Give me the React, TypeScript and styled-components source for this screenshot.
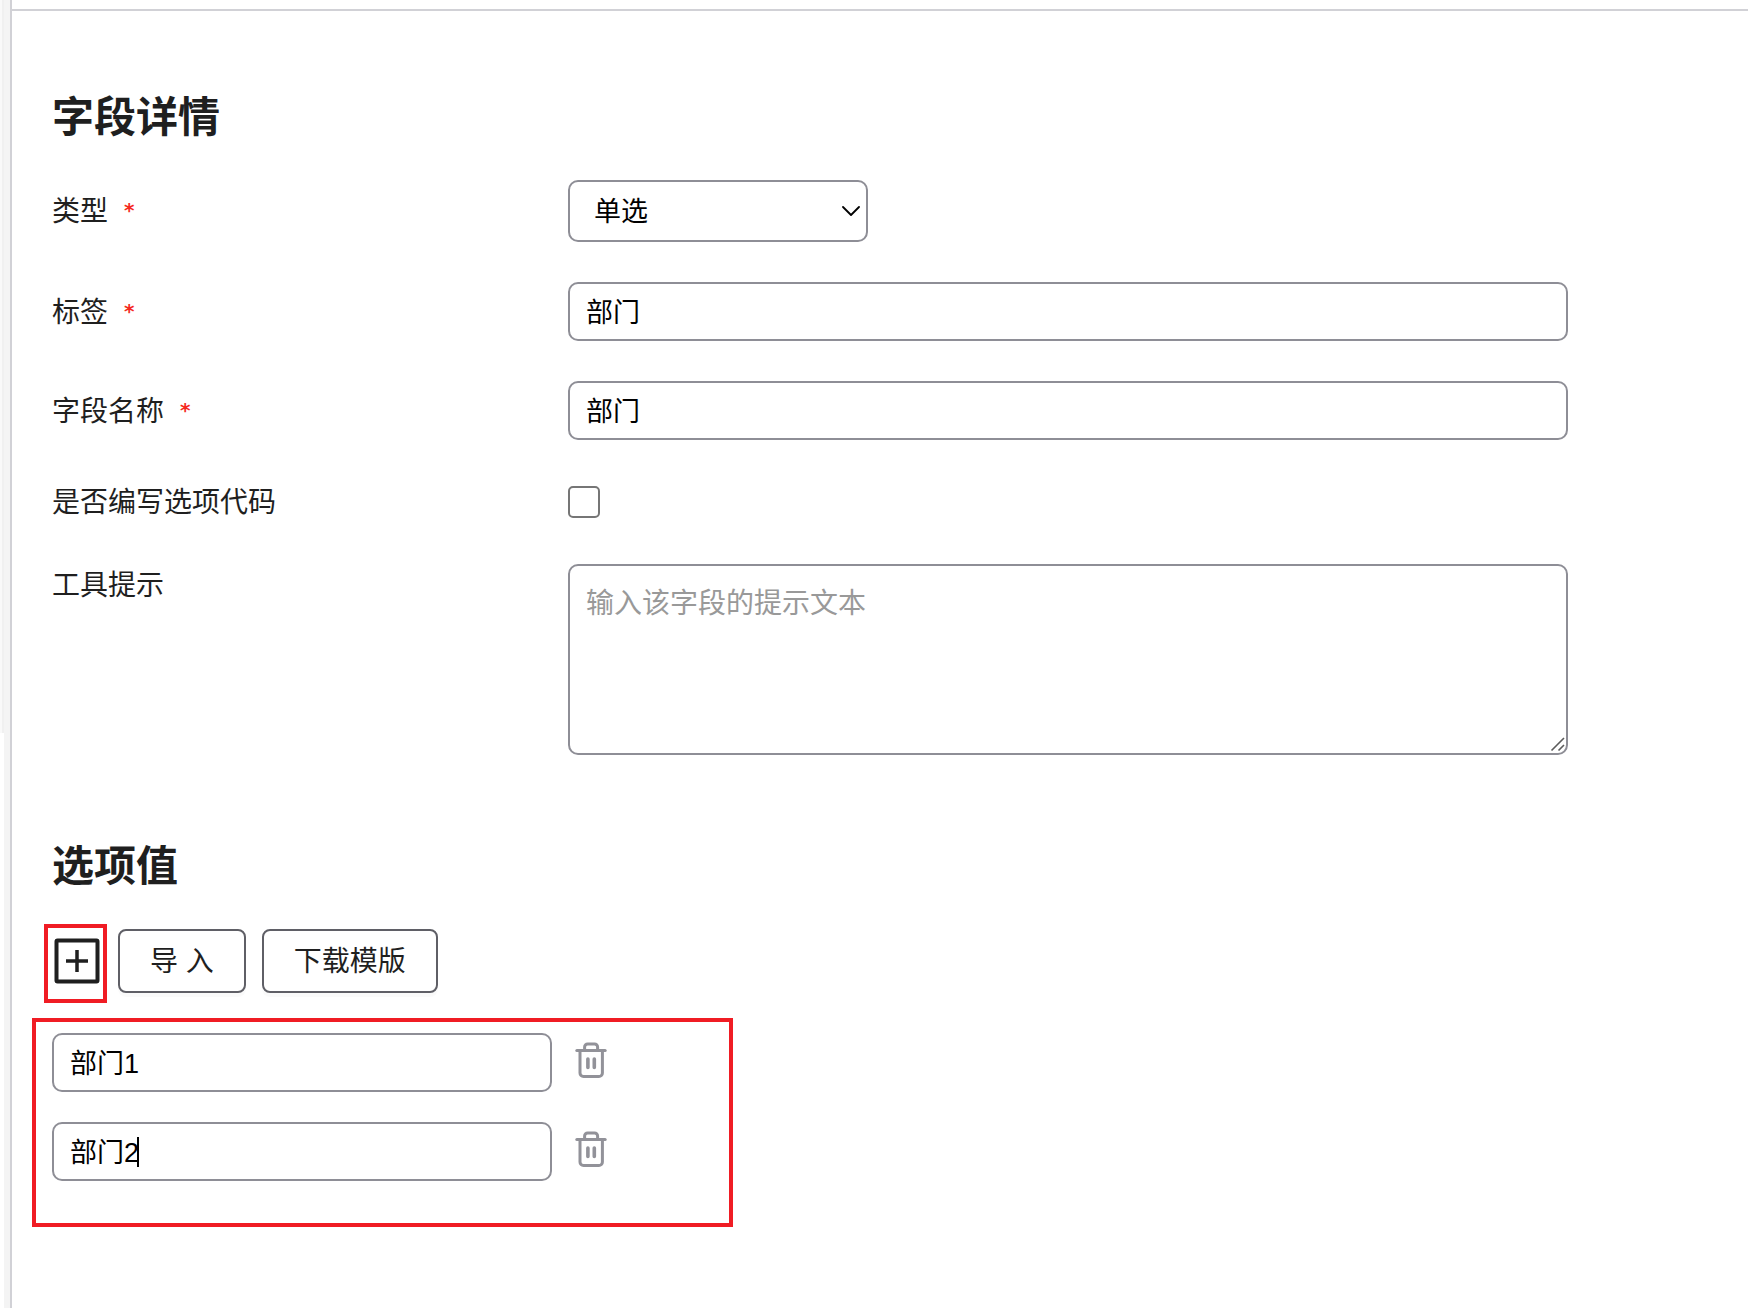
import { useState } from "react";
import styled, { createGlobalStyle } from "styled-components";

const GlobalStyle = createGlobalStyle`
  *, *::before, *::after { box-sizing: border-box; }
  body {
    margin: 0;
    background: #fff;
    color: #1f1f1f;
    font-family: "Liberation Sans", "Noto Sans CJK SC", sans-serif;
    font-size: 28px;
    line-height: 40px;
  }
  button, input, select, textarea { font-family: inherit; }
`;

const Page = styled.div`
  display: flex;
  min-height: 100vh;
`;

const Rail = styled.aside`
  display: flex;
  flex: none;
  width: 12px;
  background: #f4f4f4;
  border-right: 2px solid #d1d1d6;
`;

const RailTrack = styled.div`
  width: 4px;
  background: #fff;
`;

const RailThumb = styled.div`
  height: 733px;
  background: #f9f9f9;
  border-right: 2px solid #f0f0f0;
`;

const Main = styled.main`
  flex: 1;
  min-width: 0;
  padding-top: 9px;
`;

const Panel = styled.form`
  border-top: 2px solid #d1d1d6;
  padding: 77px 40px 80px;
`;

const Section = styled.section`
  & + & {
    margin-top: 82px;
  }
`;

const Title = styled.h2`
  margin: 0 0 32px;
  font-size: 42px;
  line-height: 60px;
  font-weight: 700;
`;

const Fields = styled.div`
  display: flex;
  flex-direction: column;
  gap: 40px;
`;

const Field = styled.div<{ $top?: boolean }>`
  display: grid;
  grid-template-columns: 516px minmax(0, 1000px);
  align-items: ${(p) => (p.$top ? "start" : "center")};
  min-height: 44px;
`;

const Label = styled.label`
  justify-self: start;
  padding-top: 2px;
`;

const Required = styled.span`
  margin-left: 16px;
  color: #f5291d;
  font-family: "DejaVu Sans", sans-serif;
  font-size: 20px;
  font-weight: 700;
  line-height: 0;
  vertical-align: 4px;
`;

const TextInput = styled.input`
  display: block;
  width: 100%;
  height: 59px;
  padding: 0 16px 2px;
  border: 2px solid #8e8e96;
  border-radius: 10px;
  background: #fff;
  color: #000;
  font-size: 27px;
`;

const SelectBox = styled.div`
  position: relative;
  width: 300px;
`;

const Select = styled.select`
  display: block;
  appearance: none;
  width: 100%;
  height: 62px;
  padding: 2px 40px 0 24px;
  border: 2px solid #8e8e96;
  border-radius: 10px;
  background: #fff;
  color: #000;
  font-size: 27px;
`;

const Chevron = styled.svg`
  position: absolute;
  top: 25px;
  right: 8px;
  pointer-events: none;
`;

const Checkbox = styled.input`
  appearance: none;
  display: block;
  width: 32px;
  height: 32px;
  margin: 0;
  border: 2px solid #767676;
  border-radius: 5px;
  background: #fff;
  &:checked {
    background: #767676;
  }
`;

const AreaBox = styled.div`
  position: relative;
`;

const TextArea = styled.textarea`
  display: block;
  width: 100%;
  height: 191px;
  padding: 18px 16px 16px;
  border: 2px solid #8e8e96;
  border-radius: 10px;
  background: #fff;
  color: #000;
  font-size: 28px;
  line-height: 40px;
  resize: vertical;
  &::placeholder {
    color: #999;
  }
  &::-webkit-resizer {
    display: none;
  }
`;

const Grip = styled.svg`
  position: absolute;
  right: 2px;
  bottom: 3px;
  pointer-events: none;
`;

const Toolbar = styled.div`
  display: flex;
  align-items: center;
  gap: 16px;
  margin-bottom: 40px;
`;

const Marked = styled.div`
  position: relative;
`;

const Highlight = styled.div<{ $inset: string }>`
  position: absolute;
  inset: ${(p) => p.$inset};
  border: 4px solid #f01c24;
  pointer-events: none;
`;

const IconButton = styled.button`
  display: flex;
  align-items: center;
  justify-content: center;
  padding: 0;
  border: 0;
  background: none;
  color: inherit;
`;

const AddButton = styled(IconButton)`
  width: 50px;
  height: 64px;
`;

const Button = styled.button`
  height: 64px;
  padding: 2px 30px 0;
  border: 2px solid #5f5f66;
  border-radius: 8px;
  background: #fff;
  box-shadow: 0 4px 0 rgba(0, 0, 0, 0.02);
  color: #1f1f1f;
  font-size: 28px;
  line-height: 40px;
`;

const OptionArea = styled.div`
  position: relative;
  width: 660px;
`;

const OptionList = styled.ul`
  display: flex;
  flex-direction: column;
  gap: 30px;
  margin: 0;
  padding: 0;
  list-style: none;
`;

const OptionRow = styled.li`
  display: flex;
  align-items: center;
  gap: 23px;
`;

const OptionField = styled.div`
  position: relative;
  width: 500px;
`;

const Caret = styled.span`
  position: absolute;
  top: 15px;
  left: 85px;
  width: 2px;
  height: 30px;
  background: #000;
`;

const DeleteButton = styled(IconButton)`
  color: #929299;
`;

const PlusBoxIcon = () => (
  <svg width="46" height="46" viewBox="0 0 46 46" fill="none" stroke="currentColor" aria-hidden="true">
    <rect x="2.5" y="2.5" width="41" height="41" rx="1" strokeWidth="4" />
    <path d="M23 12v22M12 23h22" strokeWidth="3.5" />
  </svg>
);

const TrashIcon = () => (
  <svg width="32" height="42" viewBox="0 0 32 42" fill="none" stroke="currentColor" strokeWidth="3" strokeLinecap="round" aria-hidden="true">
    <path d="M1.8 8.500h28.400" />
    <path d="M9.600 8V5a3 3 0 0 1 3-3h7a3 3 0 0 1 3 3v3" />
    <path d="M5 9.500v21.500a3.500 3.500 0 0 0 3.500 3.500h15.400a3.500 3.500 0 0 0 3.500-3.500V9.500" />
    <path d="M12.900 17v8.500M19.300 17v8.500" strokeWidth="3.6" />
  </svg>
);

export default function App() {
  const [options, setOptions] = useState(["部门1", "部门2"]);
  const activeIndex = 1;

  return (
    <>
      <GlobalStyle />
      <Page>
        <Rail>
          <RailTrack>
            <RailThumb />
          </RailTrack>
        </Rail>
        <Main>
          <Panel onSubmit={(e) => e.preventDefault()}>
            <Section>
              <Title>字段详情</Title>
              <Fields>
                <Field>
                  <Label htmlFor="type">
                    类型<Required>*</Required>
                  </Label>
                  <SelectBox>
                    <Select id="type" defaultValue="single">
                      <option value="single">单选</option>
                    </Select>
                    <Chevron width="18" height="12" viewBox="0 0 18 12" fill="none" stroke="#000" strokeWidth="1.8" aria-hidden="true">
                      <path d="M1 2l8 8 8-8" strokeLinecap="round" strokeLinejoin="round" />
                    </Chevron>
                  </SelectBox>
                </Field>
                <Field>
                  <Label htmlFor="label">
                    标签<Required>*</Required>
                  </Label>
                  <TextInput id="label" defaultValue="部门" />
                </Field>
                <Field>
                  <Label htmlFor="name">
                    字段名称<Required>*</Required>
                  </Label>
                  <TextInput id="name" defaultValue="部门" />
                </Field>
                <Field>
                  <Label htmlFor="code">是否编写选项代码</Label>
                  <Checkbox id="code" type="checkbox" />
                </Field>
                <Field $top>
                  <Label htmlFor="tip">工具提示</Label>
                  <AreaBox>
                    <TextArea id="tip" placeholder="输入该字段的提示文本" />
                    <Grip width="16" height="16" viewBox="0 0 16 16" stroke="#5c5c5c" strokeWidth="1.6" aria-hidden="true">
                      <path d="M1.500 14.500L14 2M8.500 14.500L14 9" />
                    </Grip>
                  </AreaBox>
                </Field>
              </Fields>
            </Section>

            <Section>
              <Title>选项值</Title>
              <Toolbar>
                <Marked>
                  <AddButton type="button" aria-label="添加选项" onClick={() => setOptions([...options, ""])}>
                    <PlusBoxIcon />
                  </AddButton>
                  <Highlight $inset="-5px -5px -10px -8px" />
                </Marked>
                <Button type="button">导 入</Button>
                <Button type="button">下载模版</Button>
              </Toolbar>
              <OptionArea>
                <OptionList>
                  {options.map((value, i) => (
                    <OptionRow key={i}>
                      <OptionField>
                        <TextInput
                          aria-label={`选项 ${i + 1}`}
                          value={value}
                          onChange={(e) => setOptions(options.map((o, j) => (j === i ? e.target.value : o)))}
                        />
                        {i === activeIndex && <Caret />}
                      </OptionField>
                      <DeleteButton
                        type="button"
                        aria-label="删除"
                        onClick={() => setOptions(options.filter((_, j) => j !== i))}
                      >
                        <TrashIcon />
                      </DeleteButton>
                    </OptionRow>
                  ))}
                </OptionList>
                <Highlight $inset="-15px -21px -46px -20px" />
              </OptionArea>
            </Section>
          </Panel>
        </Main>
      </Page>
    </>
  );
}
